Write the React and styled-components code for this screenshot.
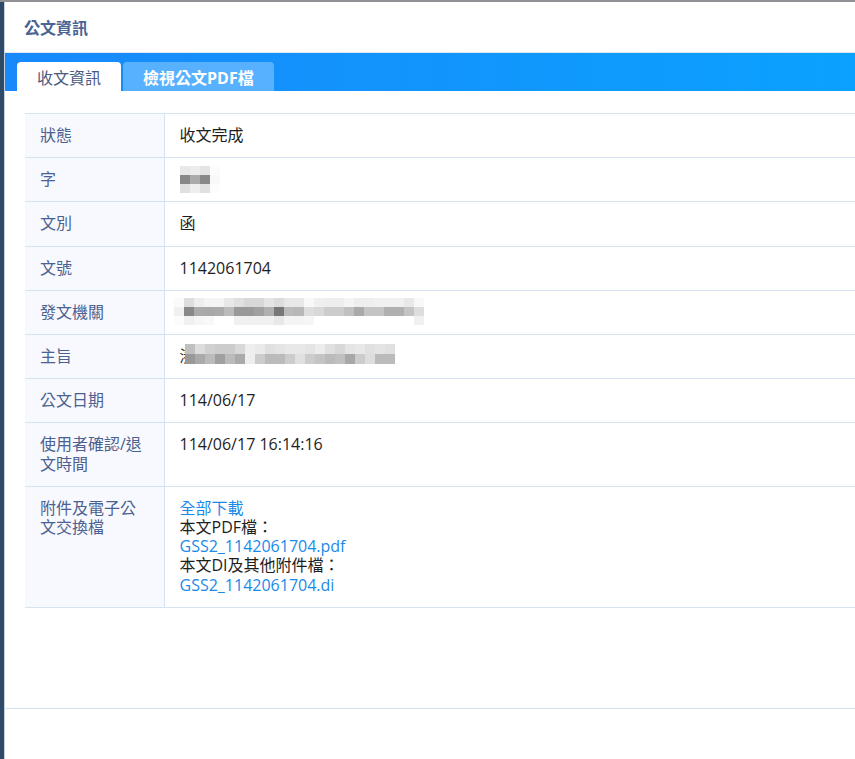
import React from "react";
import styled, { createGlobalStyle } from "styled-components";

const GlobalStyle = createGlobalStyle`
  html, body {
    margin: 0;
    padding: 0;
    overflow: hidden;
  }
  body {
    font-family: "Open Sans", "Noto Sans CJK TC", sans-serif;
    font-size: 16px;
    color: #222;
  }
`;

const Backdrop = styled.div`
  height: 100vh;
  background: #2e4a69;
  border-top: 2px solid #909095;
  padding-left: 4px;
  box-sizing: border-box;
  display: flex;
`;

const Modal = styled.div`
  width: 920px;
  flex-shrink: 0;
  background: #fff;
  border-left: 1px solid #c8d2dd;
  display: flex;
  flex-direction: column;
`;

const Header = styled.div`
  height: 51px;
  box-sizing: border-box;
  padding: 0 19px;
  display: flex;
  align-items: center;
  border-bottom: 1px solid #e2e7ee;
`;

const Title = styled.h4`
  margin: 0;
  font-size: 16px;
  font-weight: 600;
  color: #4a6494;
`;

// tab strip with the blue gradient
const TabBar = styled.div`
  height: 38px;
  box-sizing: border-box;
  padding-left: 12px;
  display: flex;
  align-items: flex-end;
  gap: 2px;
  background: linear-gradient(90deg, #1889fb 0%, #0aa3ff 100%);
`;

const Tab = styled.div`
  height: 29px;
  padding: 0 20px;
  display: flex;
  align-items: center;
  border-radius: 4px 4px 0 0;
  font-size: 16px;
  background: ${(p) => (p.$active ? "#fff" : "#58b1ff")};
  color: ${(p) => (p.$active ? "#4a5a80" : "#fff")};
  font-weight: ${(p) => (p.$active ? 400 : 700)};
`;

const Body = styled.div`
  height: 618px;
  box-sizing: border-box;
  padding: 22px 20px 0 20px;
  border-bottom: 1px solid #d3e2f2;
`;

const InfoTable = styled.table`
  width: 100%;
  border-collapse: collapse;
  border-top: 1px solid #d6e3f3;
`;

const Row = styled.tr`
  border-bottom: 1px solid #d6e3f3;
`;

const Label = styled.th`
  width: 139px;
  box-sizing: border-box;
  padding: 12px 17px 12px 15px;
  text-align: left;
  vertical-align: top;
  font-weight: 400;
  font-size: 16px;
  line-height: 19.2px;
  color: #4b6191;
  background: #f7f9fe;
  border-right: 1px solid #d6e3f3;
`;

const Value = styled.td`
  padding: 12px 15px;
  vertical-align: top;
  font-size: 16px;
  line-height: 19.2px;
  color: #1e1e1e;
`;

const Link = styled.a`
  display: block;
  color: #1a8ae9;
  text-decoration: none;
`;

const Line = styled.div``;

// pixelated block standing in for the hidden text
const Blur = styled.span`
  display: inline-flex;
  flex-direction: column;
  vertical-align: top;
  margin: ${(p) => p.$top}px 0 ${(p) => p.$bottom}px ${(p) => p.$offset || 0}px;
`;

const BlurRow = styled.span`
  display: flex;
`;

const Cell = styled.span`
  width: 10px;
  height: ${(p) => p.$h}px;
`;

const Footer = styled.div`
  flex: 1;
`;

function Redacted({ rows, cellHeight = 9, offset, top = 0, bottom = 0 }) {
  return (
    <Blur $offset={offset} $top={top} $bottom={bottom}>
      {rows.map((r, i) => (
        <BlurRow key={i}>
          {r.map((c, j) => (
            <Cell key={j} $h={cellHeight} style={{ background: "#" + c + c + c }} />
          ))}
        </BlurRow>
      ))}
    </Blur>
  );
}

const wordRows = [
  ["e8", "ec", "e4", "fc"],
  ["88", "aa", "88", "f8"],
  ["e0", "ee", "e0", "fc"],
];

const senderRows = [
  ["fa", "dd", "ee", "f4", "f4", "e8", "e0", "d8", "d8", "e4", "dc", "e8", "e8", "f8", "f0", "ee", "ee", "f4", "ee", "ee", "f0", "f0", "f0", "e8", "f8"],
  ["f0", "88", "aa", "a8", "aa", "bb", "99", "99", "a0", "b0", "77", "bb", "b8", "dd", "d8", "cc", "cc", "c0", "aa", "c4", "c4", "b0", "b0", "c4", "dd"],
  ["fc", "f0", "f6", "f8", "ff", "ff", "f0", "f0", "f0", "f0", "e8", "f4", "f4", "f6", "ff", "ff", "ff", "ff", "ff", "ff", "ff", "ff", "ff", "ff", "f0"],
];

const subjectRows = [
  ["c0", "dd", "d0", "cc", "cc", "d8", "ee", "ea", "e0", "e4", "e8", "e8", "e4", "ec", "e0", "d8", "e4", "e8", "e0", "e4", "e0"],
  ["99", "aa", "bb", "a0", "bb", "aa", "ee", "cc", "bb", "bb", "cc", "e0", "cc", "c4", "bb", "c0", "a8", "cc", "dd", "bb", "bb"],
];

export default function App() {
  return (
    <>
      <GlobalStyle />
      <Backdrop>
        <Modal>
          <Header>
            <Title>公文資訊</Title>
          </Header>
          <TabBar>
            <Tab $active>收文資訊</Tab>
            <Tab>檢視公文PDF檔</Tab>
          </TabBar>
          <Body>
            <InfoTable>
              <tbody>
                <Row>
                  <Label>狀態</Label>
                  <Value>收文完成</Value>
                </Row>
                <Row>
                  <Label>字</Label>
                  <Value>
                    <Redacted rows={wordRows} cellHeight={9} top={-4} bottom={-4} />
                  </Value>
                </Row>
                <Row>
                  <Label>文別</Label>
                  <Value>函</Value>
                </Row>
                <Row>
                  <Label>文號</Label>
                  <Value>1142061704</Value>
                </Row>
                <Row>
                  <Label>發文機關</Label>
                  <Value>
                    <Redacted rows={senderRows} cellHeight={9} offset={-6} top={-5} bottom={-3} />
                  </Value>
                </Row>
                <Row>
                  <Label>主旨</Label>
                  <Value>
                    湊
                    <Redacted rows={subjectRows} cellHeight={10} offset={-11} top={-3} bottom={-1} />
                  </Value>
                </Row>
                <Row>
                  <Label>公文日期</Label>
                  <Value>114/06/17</Value>
                </Row>
                <Row>
                  <Label>使用者確認/退文時間</Label>
                  <Value>114/06/17 16:14:16</Value>
                </Row>
                <Row>
                  <Label>附件及電子公文交換檔</Label>
                  <Value>
                    <Link href="#">全部下載</Link>
                    <Line>本文PDF檔：</Line>
                    <Link href="#">GSS2_1142061704.pdf</Link>
                    <Line>本文DI及其他附件檔：</Line>
                    <Link href="#">GSS2_1142061704.di</Link>
                  </Value>
                </Row>
              </tbody>
            </InfoTable>
          </Body>
          <Footer />
        </Modal>
      </Backdrop>
    </>
  );
}
